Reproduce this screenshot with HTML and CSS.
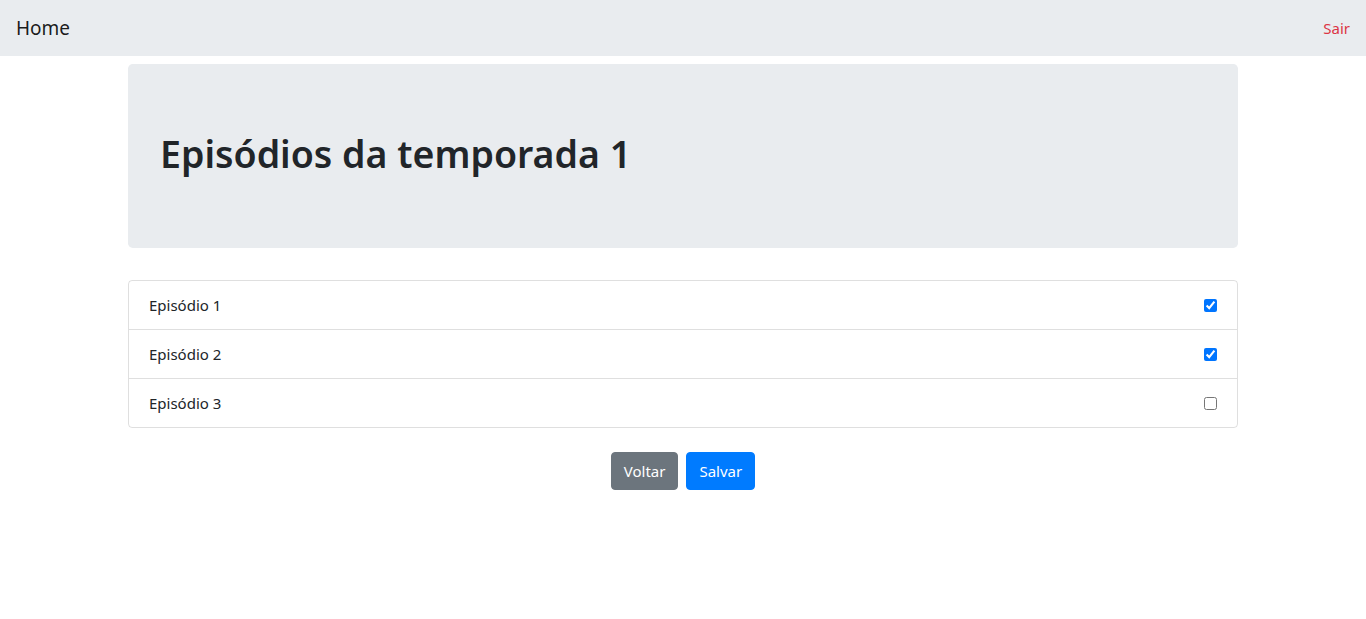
FILE: index.html
```html
<!DOCTYPE html>
<html lang="pt-BR">
<head>
<meta charset="utf-8">
<title>Episódios</title>
<link rel="stylesheet" href="styles.css">
</head>
<body>
<nav class="navbar">
  <a class="brand" href="#">Home</a>
  <a class="logout" href="#">Sair</a>
</nav>
<main class="container">
  <div class="jumbotron">
    <h1>Episódios da temporada 1</h1>
  </div>
  <form class="episodes">
    <ul class="list-group">
      <li class="list-item"><span>Episódio 1</span><input type="checkbox" checked></li>
      <li class="list-item"><span>Episódio 2</span><input type="checkbox" checked></li>
      <li class="list-item"><span>Episódio 3</span><input type="checkbox"></li>
    </ul>
    <div class="actions">
      <button type="button" class="btn btn-secondary">Voltar</button>
      <button type="button" class="btn btn-primary">Salvar</button>
    </div>
  </form>
</main>
</body>
</html>
```
FILE: styles.css
```css
* { box-sizing: border-box; }
html, body { margin: 0; padding: 0; }
body {
  font-family: "Noto Sans", "Open Sans", sans-serif;
  font-size: 16px;
  line-height: 1.5;
  color: #212529;
  background: #fff;
}
a { text-decoration: none; }
.navbar {
  display: flex;
  justify-content: space-between;
  align-items: center;
  height: 56px;
  padding: 8px 16px;
  background: #e9ecef;
}
.brand {
  font-size: 19px;
  line-height: 30px;
  color: rgba(0,0,0,.9);
}
.logout {
  color: #dc3545;
  font-size: 15px;
  line-height: 24px;
}
.container {
  width: 1140px;
  margin: 0 auto;
  padding: 0 15px;
}
.jumbotron {
  margin-top: 8px;
  margin-bottom: 32px;
  padding: 64px 32px;
  background: #e9ecef;
  border-radius: 4.8px;
}
.jumbotron h1 {
  margin: 0 0 6px;
  padding-top: 2px;
  font-size: 37.5px;
  font-weight: 600;
  line-height: 48px;
}
.list-group {
  list-style: none;
  margin: 0;
  padding: 0;
  border: 1px solid rgba(0,0,0,.125);
  border-radius: 4px;
}
.list-item {
  display: flex;
  justify-content: space-between;
  align-items: center;
  padding: 12px 20px;
  line-height: 24px;
  font-size: 15px;
}
.list-item + .list-item {
  border-top: 1px solid rgba(0,0,0,.125);
}
.list-item input {
  margin: 0;
  width: 13px;
  height: 13px;
}
.actions {
  display: flex;
  justify-content: center;
  gap: 8px;
  margin-top: 24px;
}
.btn {
  font-family: inherit;
  font-size: 15px;
  line-height: 24px;
  padding: 6px 12px;
  border: 1px solid transparent;
  border-radius: 4px;
  color: #fff;
  cursor: pointer;
}
.btn-secondary { background: #6c757d; border-color: #6c757d; }
.btn-primary { background: #007bff; border-color: #007bff; }
```
